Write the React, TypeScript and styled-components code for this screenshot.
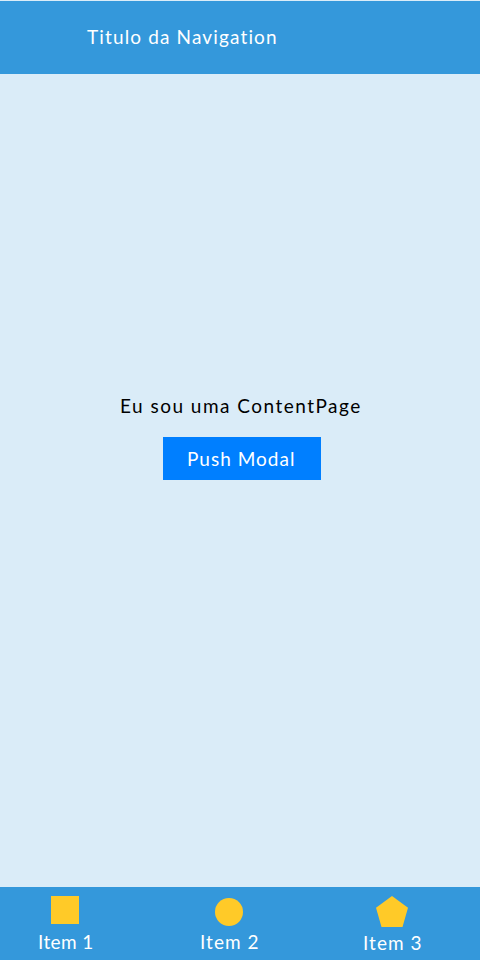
import React from 'react';
import styled, { createGlobalStyle } from 'styled-components';

const GlobalStyle = createGlobalStyle`
  * { box-sizing: border-box; }
  body { margin: 0; }
`;

const Screen = styled.div`
  display: flex;
  flex-direction: column;
  width: 480px;
  height: 960px;
  border-top: 1px solid #daecf8;
  background: #daecf8;
  font-family: Lato, sans-serif;
  font-size: 19px;
  color: #000;
`;

const NavigationBar = styled.header`
  display: flex;
  flex: none;
  height: 73px;
  padding: 24px 0 0 87px;
  background: #3498db;
  color: #fff;
`;

const Label = styled.span<{ $spacing?: number }>`
  line-height: 24px;
  white-space: nowrap;
  letter-spacing: ${({ $spacing = 1 }) => $spacing}px;
`;

const Content = styled.main`
  display: flex;
  flex: 1;
  flex-direction: column;
  align-items: flex-start;
  padding-top: 320px;
`;

const Message = styled.p`
  display: flex;
  margin: 0 0 19px 120px;
`;

const ModalButton = styled.button`
  display: flex;
  width: 158px;
  height: 43px;
  margin-left: 163px;
  padding: 10px 0 0 24px;
  border: 0;
  background: #007fff;
  color: #fff;
  font: inherit;
  text-align: left;
`;

const TabBar = styled.nav`
  display: flex;
  flex: none;
  height: 73px;
  background: #3498db;
  color: #fff;
`;

const Tab = styled.div<{ $left: number }>`
  display: flex;
  flex-direction: column;
  width: 160px;
  padding: 8px 0 0 ${({ $left }) => $left}px;
`;

const Icon = styled.svg<{ $height?: number }>`
  display: block;
  width: 56px;
  height: ${({ $height = 35 }) => $height}px;
  fill: #ffca28;
`;

export default function App() {
  return (
    <>
      <GlobalStyle />
      <Screen>
        <NavigationBar><Label $spacing={1.14}>Titulo da Navigation</Label></NavigationBar>
        <Content>
          <Message><Label $spacing={1.48}>Eu sou uma ContentPage</Label></Message>
          <ModalButton><Label $spacing={1.02}>Push Modal</Label></ModalButton>
        </Content>
        <TabBar>
          <Tab $left={38}>
            <Icon viewBox="0 0 56 35"><rect x="13" y="1" width="28" height="28" /></Icon>
            <Label $spacing={0.4}>Item 1</Label>
          </Tab>
          <Tab $left={40}>
            <Icon viewBox="0 0 56 35"><circle cx="29" cy="17" r="14" /></Icon>
            <Label $spacing={1.05}>Item 2</Label>
          </Tab>
          <Tab $left={43}>
            <Icon $height={36} viewBox="0 0 56 36"><path d="M29 1 45 12.8 39.5 32H18.5L13 12.8Z" /></Icon>
            <Label $spacing={1.05}>Item 3</Label>
          </Tab>
        </TabBar>
      </Screen>
    </>
  );
}
